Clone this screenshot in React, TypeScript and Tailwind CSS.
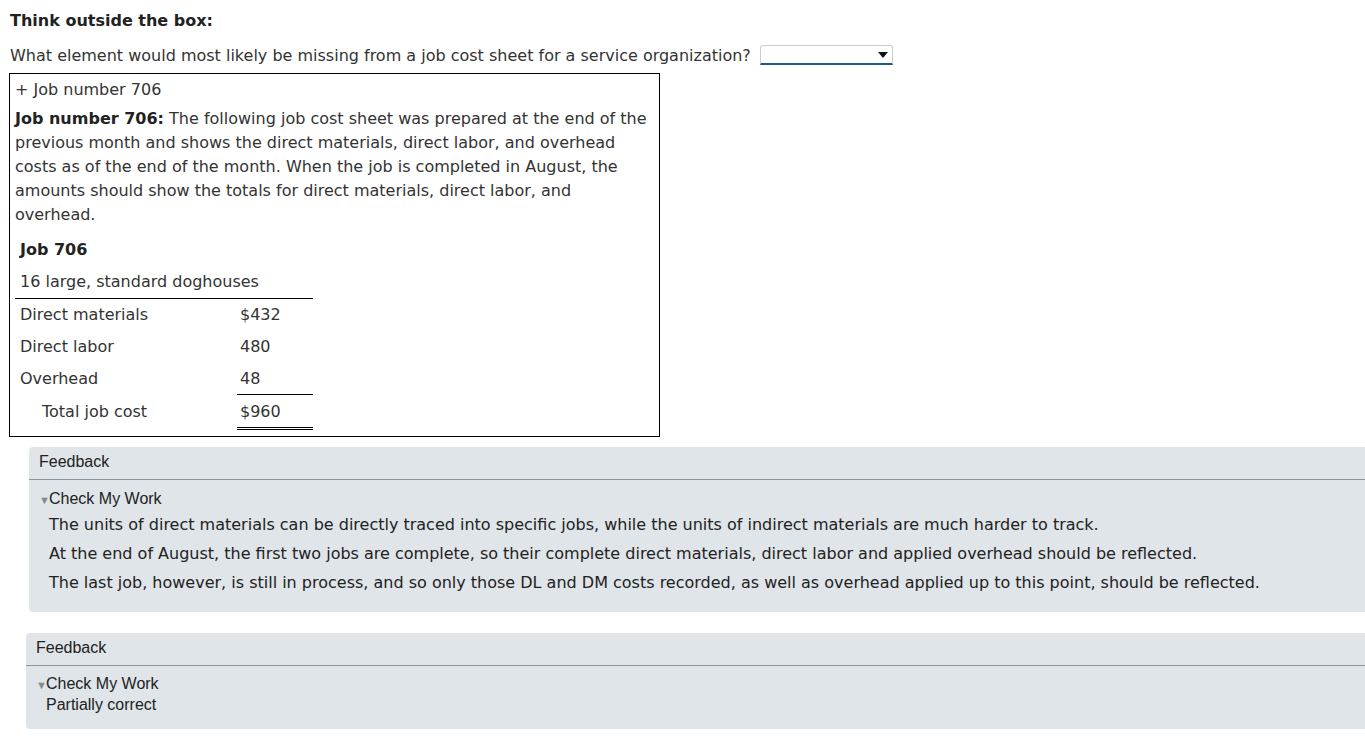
const verdana = "font-['DejaVu_Sans',Verdana,sans-serif]";
const arial = "font-['Liberation_Sans',Arial,sans-serif]";

const costRows = [
  { label: 'Direct materials', amount: '$432' },
  { label: 'Direct labor', amount: '480' },
  { label: 'Overhead', amount: '48' },
];

function Feedback({ children, className }: { children: React.ReactNode; className: string }) {
  return (
    <div className={`bg-[#dfe5e8] rounded-l-[4px] text-[#222] ${className}`}>
      <div className={`${arial} text-[16px] leading-[20px] pl-[10px] pt-[5px] pb-[7px]`}>Feedback</div>
      <div className="h-px bg-[#8c959b]" />
      {children}
    </div>
  );
}

function CheckMyWork() {
  return (
    <div className={`${arial} text-[16px] leading-[20px] flex items-center`}>
      <span className="text-[#888] text-[11px] leading-[20px] w-[10px] pt-[2px]">▼</span>
      <span>Check My Work</span>
    </div>
  );
}

export default function App() {
  return (
    <div className={`${verdana} text-[16px] text-[#333] bg-white min-h-[742px] w-[1365px]`}>
      <div className="pl-[10px] pt-[9px]">
        <h2 className="font-bold text-[#222] leading-[24px]">Think outside the box:</h2>
        <div className="flex items-center mt-[11px] h-[24px]">
          <span>What element would most likely be missing from a job cost sheet for a service organization?</span>
          {/* dropdown */}
          <div className="ml-[9px] w-[133px] h-[20px] border border-[#ccc] border-b-2 border-b-[#1e5a7d] rounded-t-[3px] flex items-center justify-end pr-[4px] mt-[-2px]">
            <svg width="10" height="6" viewBox="0 0 10 6">
              <path d="M0 0 L10 0 L5 6 Z" fill="#111" />
            </svg>
          </div>
        </div>
      </div>

      {/* job box */}
      <div className="ml-[9px] mt-[5px] w-[651px] border border-black pl-[5px] pt-[4px] pb-[6px]">
        <div className="leading-[24px]">+ Job number 706</div>
        <p className="leading-[24px] mt-[5px] w-[638px]">
          <b className="text-[#222]">Job number 706:</b> The following job cost sheet was prepared at the end of the
          previous month and shows the direct materials, direct labor, and overhead costs as of the end of the month.
          When the job is completed in August, the amounts should show the totals for direct materials, direct labor,
          and overhead.
        </p>
        <table className="mt-[7px] border-collapse">
          <tbody>
            <tr className="h-[32px]">
              <td colSpan={2} className="pl-[5px] font-bold text-[#222]">Job 706</td>
            </tr>
            <tr className="h-[32px]">
              <td colSpan={2} className="pl-[5px] border-b border-black">16 large, standard doghouses</td>
            </tr>
            {costRows.map((r, i) => (
              <tr key={r.label} className="h-[32px]">
                <td className="pl-[5px] w-[222px] pt-[2px]">{r.label}</td>
                <td className={`pl-[3px] w-[76px] pt-[2px] ${i === costRows.length - 1 ? 'border-b border-black' : ''}`}>
                  {r.amount}
                </td>
              </tr>
            ))}
            <tr className="h-[34px]">
              <td className="pl-[27px] pt-[2px]">Total job cost</td>
              <td className="pl-[3px] pt-[2px] border-b-[3px] border-double border-black">$960</td>
            </tr>
          </tbody>
        </table>
      </div>

      <Feedback className="ml-[29px] mt-[10px] h-[165px]">
        <div className="pl-[10px] pt-[8px]">
          <CheckMyWork />
          <div className="pl-[10px] leading-[29px]">
            <p>The units of direct materials can be directly traced into specific jobs, while the units of indirect materials are much harder to track.</p>
            <p>At the end of August, the first two jobs are complete, so their complete direct materials, direct labor and applied overhead should be reflected.</p>
            <p>The last job, however, is still in process, and so only those DL and DM costs recorded, as well as overhead applied up to this point, should be reflected.</p>
          </div>
        </div>
      </Feedback>

      <Feedback className="ml-[26px] mt-[21px] h-[96px]">
        <div className="pl-[10px] pt-[7px]">
          <CheckMyWork />
          <div className={`${arial} pl-[10px] leading-[19px]`}>Partially correct</div>
        </div>
      </Feedback>
    </div>
  );
}
